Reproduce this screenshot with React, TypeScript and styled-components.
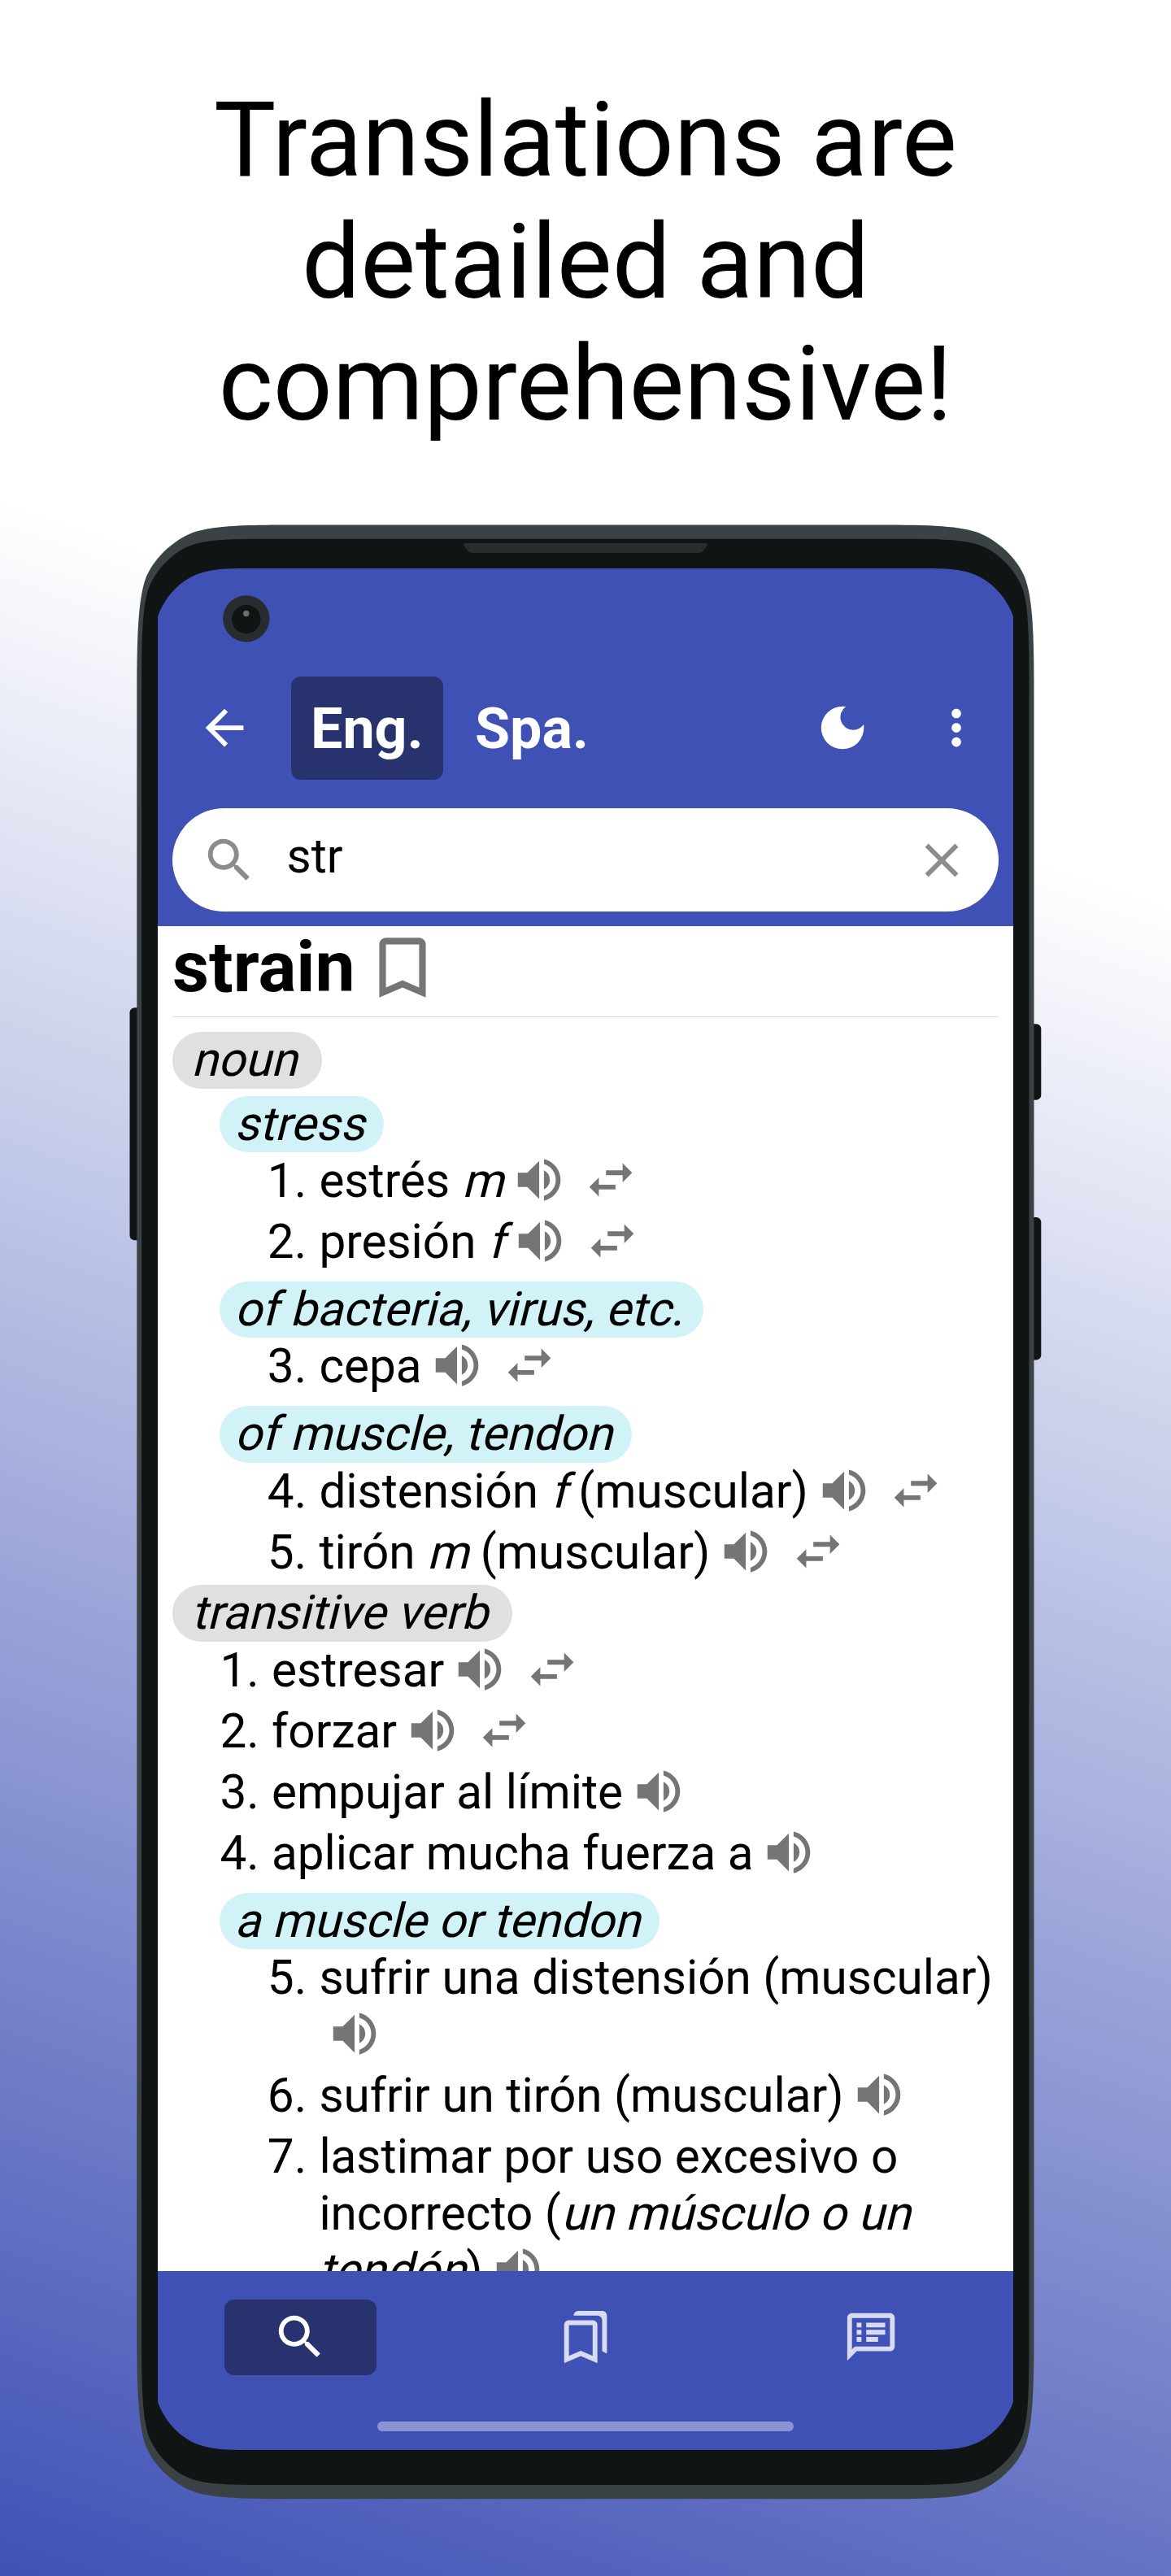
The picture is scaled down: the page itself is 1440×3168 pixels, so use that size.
import React from "react";
import styled, { createGlobalStyle } from "styled-components";

const PRIMARY = "#3f51b5";
const PRIMARY_DARK = "#27326f";

const GlobalStyle = createGlobalStyle`
  * { box-sizing: border-box; }
  body { margin: 0; }
`;

const Page = styled.main`
  width: 1440px;
  height: 3168px;
  overflow: hidden;
  display: flex;
  flex-direction: column;
  align-items: center;
  padding-top: 97px;
  background: linear-gradient(199.2deg, #fff 30.3%, ${PRIMARY} 100%);
  font-family: Roboto, "Liberation Sans", sans-serif;
  color: #000;
`;

const Headline = styled.h1`
  margin: 0;
  width: 1000px;
  height: 548px;
  font-size: 128px;
  line-height: 150px;
  font-weight: 400;
  text-align: center;
`;

const Phone = styled.div`
  position: relative;
  width: 1124px;
  height: 2430px;
  padding: 54px 0 0 36px;
`;

const Frame = styled.svg`
  position: absolute;
  left: 0;
  top: 0;
  display: block;
`;

const Screen = styled.div`
  position: relative;
  width: 1052px;
  height: 2314px;
  display: flex;
  flex-direction: column;
  background: ${PRIMARY};
  clip-path: path(
    "M0 59 C9 35 26 16 49 7 C64 1.5 78 0 110 0 H942 C974 0 988 1.5 1003 7 C1026 16 1043 35 1052 59 V2255 C1043 2279 1026 2298 1003 2307 C988 2312.5 974 2314 942 2314 H110 C78 2314 64 2312.5 49 2307 C26 2298 9 2279 0 2255 Z"
  );
`;

const Camera = styled.svg`
  position: absolute;
  left: 80px;
  top: 33px;
`;

const Header = styled.header`
  height: 440px;
  flex: none;
  padding: 133px 18px 0;
`;

const Toolbar = styled.div`
  display: flex;
  align-items: center;
  height: 127px;
  padding-left: 29px;
  color: #fff;
`;

const Tabs = styled.div`
  display: flex;
  gap: 15px;
`;

const LangTab = styled.div<{ $active?: boolean }>`
  height: 127px;
  padding: 0 24px;
  display: flex;
  align-items: center;
  border-radius: 12px;
  background: ${(p) => (p.$active ? PRIMARY_DARK : "transparent")};
  font-size: 70px;
  font-weight: 700;
`;

const BackSlot = styled.div`
  display: flex;
  width: 117px;
`;

const Actions = styled.div`
  margin-left: auto;
  display: flex;
  gap: 70px;
  padding-right: 17px;
`;

const SearchField = styled.div`
  display: flex;
  align-items: center;
  height: 127px;
  margin-top: 35.4px;
  padding: 0 35px 0 34.5px;
  border-radius: 64px;
  background: #fff;
  color: #8c8c8c;
`;

const Query = styled.span`
  flex: 1;
  margin: -9px 0 0 36px;
  font-size: 58.44px;
  line-height: 70px;
  color: #000;
`;

const Content = styled.section`
  height: 1654px;
  flex: none;
  overflow: hidden;
  padding: 0 18px;
  background: #fff;
`;

const WordRow = styled.div`
  display: flex;
  align-items: center;
  height: 111.5px;
  padding-bottom: 9px;
  border-bottom: 1.5px solid #dcdcdc;
  margin-bottom: 18.8px;
  color: #757575;
`;

const Word = styled.h2`
  margin: 0 9.3px 0 0;
  font-size: 87.7px;
  line-height: 103px;
  font-weight: 700;
  color: #000;
`;

const Slanted = styled.em`
  display: inline-block;
  font-style: normal;
  transform: skewX(-14deg);
  transform-origin: 0 55px;
`;

const Tag = styled.div<{ $kind: "pos" | "sense" }>`
  width: fit-content;
  height: 69.4px;
  padding: ${(p) => (p.$kind === "pos" ? "0 30.6px 0 23.4px" : "0 24.5px 0 17.6px")};
  border-radius: 35px;
  background: ${(p) => (p.$kind === "pos" ? "#e0e0e0" : "#d1f2f7")};
  font-size: 58.44px;
  line-height: 69.8px;
  white-space: nowrap;
`;

const Section = styled.section`
  margin-bottom: 0.4px;
`;

const Sense = styled.div`
  padding: 9px 0 0 58.4px;
`;

const Items = styled.ol`
  list-style: none;
  margin: 0;
  padding: 0 0 0 58.4px;
`;

const Item = styled.li`
  display: flex;
  font-size: 58.44px;
  line-height: 70.1px;
  padding-bottom: 4.9px;
`;

const Num = styled.span`
  flex: none;
  width: 63.6px;
`;

const Body = styled.div`
  flex: 1;
  min-width: 0;
`;

const InlineIcon = styled.span<{ $gap: number }>`
  display: inline-block;
  width: 70.1px;
  height: 68px;
  margin: -1px 0 0 ${(p) => p.$gap}px;
  vertical-align: top;
  color: #757575;
`;

const Nav = styled.nav`
  height: 220px;
  flex: none;
  display: flex;
  flex-direction: column;
  align-items: center;
  padding-top: 35px;
`;

const NavRow = styled.div`
  display: flex;
  width: 100%;
`;

const NavCell = styled.div`
  flex: 1;
  display: flex;
  justify-content: center;
`;

const NavButton = styled.div<{ $active?: boolean }>`
  width: 187px;
  height: 93px;
  display: flex;
  align-items: center;
  justify-content: center;
  border-radius: 12px;
  background: ${(p) => (p.$active ? PRIMARY_DARK : "transparent")};
  color: ${(p) => (p.$active ? "#fff" : "#d9dbf0")};
`;

const GestureBar = styled.div`
  width: 512px;
  height: 12px;
  margin-top: 57px;
  border-radius: 6px;
  background: #8b94d1;
`;

const Svg = styled.svg`
  display: block;
  flex: none;
`;

const PATHS = {
  back: "M20 11H7.83l5.59-5.59L12 4l-8 8 8 8 1.41-1.41L7.83 13H20v-2z",
  moon: "M12 3a9 9 0 1 0 9 9c0-.46-.04-.92-.1-1.36a5.389 5.389 0 0 1-4.4 2.26 5.403 5.403 0 0 1-3.14-9.8c-.44-.06-.9-.1-1.36-.1z",
  more: "M12 8c1.1 0 2-.9 2-2s-.9-2-2-2-2 .9-2 2 .9 2 2 2zm0 2c-1.1 0-2 .9-2 2s.9 2 2 2 2-.9 2-2-.9-2-2-2zm0 6c-1.1 0-2 .9-2 2s.9 2 2 2 2-.9 2-2-.9-2-2-2z",
  search:
    "M15.5 14h-.79l-.28-.27A6.471 6.471 0 0 0 16 9.5 6.5 6.5 0 1 0 9.5 16c1.61 0 3.09-.59 4.23-1.57l.27.28v.79l5 4.99L20.49 19l-4.99-5zm-6 0C7.01 14 5 11.99 5 9.5S7.01 5 9.5 5 14 7.01 14 9.5 11.99 14 9.5 14z",
  close:
    "M19 6.41 17.59 5 12 10.59 6.41 5 5 6.41 10.59 12 5 17.59 6.41 19 12 13.41 17.59 19 19 17.59 13.41 12z",
  bookmark: "M17 3H7c-1.1 0-2 .9-2 2v16l7-3 7 3V5c0-1.1-.9-2-2-2zm0 15-5-2.18L7 18V5h10v13z",
  volume:
    "M3 9v6h4l5 5V4L7 9H3zm13.5 3A4.5 4.5 0 0 0 14 7.97v8.05c1.48-.73 2.5-2.25 2.5-4.02zM14 3.23v2.06c2.89.86 5 3.54 5 6.71s-2.11 5.85-5 6.71v2.06c4.01-.91 7-4.49 7-8.77s-2.99-7.86-7-8.77z",
  swap: "M6.99 11 3 15l3.99 4v-3H14v-2H6.99v-3zM21 9l-3.99-4v3H10v2h7.01v3L21 9z",
  bookmarks:
    "M15 7v12.97l-4.21-1.81-.79-.34-.79.34L5 19.97V7h10m4-6H8.99C7.89 1 7 1.9 7 3h10c1.1 0 2 .9 2 2v13l2 1V3c0-1.1-.9-2-2-2zm-4 4H5c-1.1 0-2 .9-2 2v16l7-3 7 3V7c0-1.1-.9-2-2-2z",
  notes:
    "M20 2H4c-1.1 0-1.99.9-1.99 2L2 22l4-4h14c1.1 0 2-.9 2-2V4c0-1.1-.9-2-2-2zm0 14H5.17L4 17.17V4h16v12zM6 12h2v2H6zm0-3h2v2H6zm0-3h2v2H6zm4 6h5v2h-5zm0-3h8v2h-8zm0-3h8v2h-8z",
};

function Icon({ name, size = 70.1 }: { name: keyof typeof PATHS; size?: number }) {
  return (
    <Svg width={size} height={size} viewBox="0 0 24 24" fill="currentColor" aria-hidden="true">
      <path d={PATHS[name]} />
    </Svg>
  );
}

/* Slants each word on its own so that a long phrase can still wrap. */
function Oblique({ children }: { children: string }) {
  return (
    <>
      {children.split(" ").map((word, i) => (
        <React.Fragment key={i}>
          {i > 0 && " "}
          <Slanted>{word}</Slanted>
        </React.Fragment>
      ))}
    </>
  );
}

function Label({ kind, children }: { kind: "pos" | "sense"; children: string }) {
  return (
    <Tag $kind={kind}>
      <Slanted>{children}</Slanted>
    </Tag>
  );
}

type Entry = { n: number; text: React.ReactNode; swap?: boolean };

function Entries({ items }: { items: Entry[] }) {
  return (
    <Items>
      {items.map((it) => (
        <Item key={it.n}>
          <Num>{it.n}.</Num>
          <Body>
            {it.text}
            <InlineIcon $gap={8.8}>
              <Icon name="volume" />
            </InlineIcon>
            {it.swap && (
              <InlineIcon $gap={18.5}>
                <Icon name="swap" />
              </InlineIcon>
            )}
          </Body>
        </Item>
      ))}
    </Items>
  );
}

function PhoneFrame() {
  return (
    <Frame width="1124" height="2430" viewBox="158 645 1124 2430" aria-hidden="true">
      <g fill="#101415">
        <rect x="159.5" y="1239.3" width="20" height="286" rx="6" />
        <rect x="1260" y="1259.3" width="20.3" height="93.5" rx="6" />
        <rect x="1260" y="1497" width="20.3" height="175.6" rx="6" />
      </g>
      <path
        fill="#3b4245"
        d="M168.3 850 C168.3 780 170 735 179.8 709.5 C188 690 207 669 231.8 657.2 C252 648 285 645.5 350 645.5 H1090 C1155 645.5 1188 648 1208 657.2 C1233 669 1252 690 1260 709.5 C1270 735 1271.5 780 1271.5 850 V2869 C1271.5 2939 1270 2984 1260 3009.5 C1252 3029 1233 3050 1208 3061.8 C1188 3071 1155 3073.3 1090 3073.3 H350 C285 3073.3 252 3071 231.8 3061.8 C207 3050 188 3029 179.8 3009.5 C170 2984 168.3 2939 168.3 2869 Z"
      />
      <path
        fill="#101415"
        d="M174 840 C174 775 176 744 182.5 724 C190 704 207 684 228 673.4 C248 664 275 662.7 330 662.7 H1110 C1165 662.7 1192 664 1212 673.4 C1233 684 1250 704 1257.5 724 C1264 744 1265.5 775 1265.5 840 V2879 C1265.5 2944 1264 2975 1257.5 2995 C1250 3015 1233 3035 1212 3045.6 C1192 3055 1165 3056 1110 3056 H330 C275 3056 248 3055 228 3045.6 C207 3035 190 3015 182.5 2995 C176 2975 174 2944 174 2879 Z"
      />
      <path
        fill="#272c2f"
        d="M573 667.9 H867 Q873 669 869 672 L865 677 Q863 680 858 680 H582 Q577 680 575 677 L571 672 Q567 669 573 667.9 Z"
      />
    </Frame>
  );
}

export default function App() {
  return (
    <>
      <GlobalStyle />
      <Page>
        <Headline>
          Translations are
          <br />
          detailed and
          <br />
          comprehensive!
        </Headline>
        <Phone>
          <PhoneFrame />
          <Screen>
            <Camera width="58" height="58" viewBox="0 0 58 58" aria-hidden="true">
              <circle cx="28.8" cy="28.8" r="28.6" fill="#272c2f" />
              <circle cx="28.8" cy="29.5" r="17.7" fill="#101415" />
              <circle cx="28.8" cy="22.5" r="3.7" fill="#647071" />
            </Camera>
            <Header>
              <Toolbar>
                <BackSlot>
                  <Icon name="back" />
                </BackSlot>
                <Tabs>
                  <LangTab $active>Eng.</LangTab>
                  <LangTab>Spa.</LangTab>
                </Tabs>
                <Actions>
                  <Icon name="moon" />
                  <Icon name="more" />
                </Actions>
              </Toolbar>
              <SearchField>
                <Icon name="search" />
                <Query>str</Query>
                <Icon name="close" />
              </SearchField>
            </Header>
            <Content>
              <WordRow>
                <Word>strain</Word>
                <Icon name="bookmark" size={98} />
              </WordRow>
              <Section>
                <Label kind="pos">noun</Label>
                <Sense>
                  <Label kind="sense">stress</Label>
                  <Entries
                    items={[
                      { n: 1, text: <>estrés <Oblique>m</Oblique></>, swap: true },
                      { n: 2, text: <>presión <Oblique>f</Oblique></>, swap: true },
                    ]}
                  />
                </Sense>
                <Sense>
                  <Label kind="sense">of bacteria, virus, etc.</Label>
                  <Entries items={[{ n: 3, text: "cepa", swap: true }]} />
                </Sense>
                <Sense>
                  <Label kind="sense">of muscle, tendon</Label>
                  <Entries
                    items={[
                      { n: 4, text: <>distensión <Oblique>f</Oblique> (muscular)</>, swap: true },
                      { n: 5, text: <>tirón <Oblique>m</Oblique> (muscular)</>, swap: true },
                    ]}
                  />
                </Sense>
              </Section>
              <Section>
                <Label kind="pos">transitive verb</Label>
                <Entries
                  items={[
                    { n: 1, text: "estresar", swap: true },
                    { n: 2, text: "forzar", swap: true },
                    { n: 3, text: "empujar al límite" },
                    { n: 4, text: "aplicar mucha fuerza a" },
                  ]}
                />
                <Sense>
                  <Label kind="sense">a muscle or tendon</Label>
                  <Entries
                    items={[
                      { n: 5, text: "sufrir una distensión (muscular)" },
                      { n: 6, text: "sufrir un tirón (muscular)" },
                      {
                        n: 7,
                        text: (
                          <>
                            lastimar por uso excesivo o incorrecto (<Oblique>un músculo o un tendón</Oblique>)
                          </>
                        ),
                      },
                    ]}
                  />
                </Sense>
              </Section>
            </Content>
            <Nav>
              <NavRow>
                <NavCell>
                  <NavButton $active>
                    <Icon name="search" />
                  </NavButton>
                </NavCell>
                <NavCell>
                  <NavButton>
                    <Icon name="bookmarks" />
                  </NavButton>
                </NavCell>
                <NavCell>
                  <NavButton>
                    <Icon name="notes" />
                  </NavButton>
                </NavCell>
              </NavRow>
              <GestureBar />
            </Nav>
          </Screen>
        </Phone>
      </Page>
    </>
  );
}
